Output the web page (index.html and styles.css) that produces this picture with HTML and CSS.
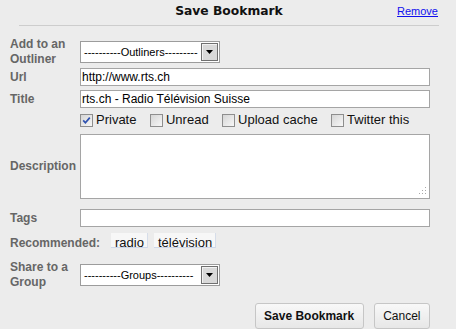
FILE: index.html
```html
<!DOCTYPE html>
<html lang="fr">
<head>
<meta charset="utf-8">
<title>Save Bookmark</title>
<link rel="stylesheet" href="styles.css">
</head>
<body>
<div class="dialog">
  <header class="head">
    <span></span>
    <h1 class="title">Save Bookmark</h1>
    <a class="remove" href="#">Remove</a>
  </header>
  <form class="form">
    <div class="row row-tall">
      <label class="label">Add to an Outliner</label>
      <div class="select">
        <span class="select-text">----------Outliners---------</span>
        <span class="select-btn"><svg width="7" height="4" viewBox="0 0 7 4"><polygon points="0,0 7,0 3.5,4" fill="#000"/></svg></span>
      </div>
    </div>
    <div class="row row-url">
      <label class="label">Url</label>
      <input class="input" type="text" value="http://www.rts.ch">
    </div>
    <div class="row row-title">
      <label class="label">Title</label>
      <input class="input" type="text" value="rts.ch - Radio Télévision Suisse">
    </div>
    <div class="checks">
      <span class="check"><span class="cb"><svg width="11" height="11" viewBox="0 0 11 11"><path d="M2.2 5.4 L4.4 7.8 L8.8 2.6" fill="none" stroke="#2f52b0" stroke-width="1.7"/></svg></span>Private</span>
      <span class="check"><span class="cb"></span>Unread</span>
      <span class="check"><span class="cb"></span>Upload cache</span>
      <span class="check"><span class="cb"></span>Twitter this</span>
    </div>
    <div class="row row-desc">
      <label class="label">Description</label>
      <div class="area-wrap">
        <textarea class="area"></textarea>
        <svg class="grip" width="9" height="9" viewBox="0 0 9 9"><g fill="#a8a8a8"><rect x="7" y="1" width="1" height="1"/><rect x="4" y="4" width="1" height="1"/><rect x="7" y="4" width="1" height="1"/><rect x="1" y="7" width="1" height="1"/><rect x="4" y="7" width="1" height="1"/><rect x="7" y="7" width="1" height="1"/></g></svg>
      </div>
    </div>
    <div class="row row-tags">
      <label class="label">Tags</label>
      <input class="input" type="text" value="">
    </div>
    <div class="row row-rec">
      <span class="label label-auto">Recommended:</span>
      <span class="tag">radio</span>
      <span class="tag">télévision</span>
    </div>
    <div class="row row-tall row-share">
      <label class="label label-share">Share to a Group</label>
      <div class="select">
        <span class="select-text">----------Groups----------</span>
        <span class="select-btn"><svg width="7" height="4" viewBox="0 0 7 4"><polygon points="0,0 7,0 3.5,4" fill="#000"/></svg></span>
      </div>
    </div>
    <div class="actions">
      <button type="button" class="btn btn-primary">Save Bookmark</button>
      <button type="button" class="btn">Cancel</button>
    </div>
  </form>
</div>
</body>
</html>
```
FILE: styles.css
```css
html, body {
  margin: 0;
  padding: 0;
}
body {
  background: #ececec;
  font-family: "Liberation Sans", Arial, sans-serif;
  color: #000;
  width: 456px;
  height: 329px;
  overflow: hidden;
}
.head {
  display: grid;
  grid-template-columns: 1fr auto 1fr;
  align-items: center;
  margin: 0 17px 0 19px;
  height: 26px;
  box-sizing: border-box;
  padding-bottom: 3px;
  border-bottom: 1px solid #cdcdcd;
}
.title {
  margin: 0;
  font-family: "DejaVu Sans", Verdana, sans-serif;
  font-weight: bold;
  font-size: 12.3px;
  color: #111;
}
.remove {
  justify-self: end;
  margin-right: 1px;
  font-size: 11px;
  color: #1010ee;
  text-decoration: underline;
}
.form {
  display: flex;
  flex-direction: column;
  padding: 11px 26px 0 10px;
  margin: 0;
}
.row {
  display: flex;
  align-items: center;
}
.label {
  width: 70px;
  flex: none;
  font-weight: bold;
  font-size: 12px;
  line-height: 15px;
  color: #666;
}
.row-tall {
  min-height: 30px;
}
.row-url {
  margin-top: 1px;
}
.row-title {
  margin-top: 4px;
}
.input {
  flex: 1;
  min-width: 0;
  height: 18px;
  box-sizing: border-box;
  margin: 0;
  padding: 0 1px;
  border: 1px solid #a5a5a5;
  background: #fff;
  font-family: "Liberation Sans", Arial, sans-serif;
  font-size: 12px;
  color: #000;
  outline: none;
}
.select {
  width: 140px;
  height: 22px;
  box-sizing: border-box;
  border: 1px solid #9c9c9c;
  background: #fff;
  display: flex;
  align-items: center;
  padding: 1px;
  font-size: 11px;
}
.select-text {
  flex: 1;
  padding-left: 2px;
  white-space: nowrap;
  overflow: hidden;
}
.select-btn {
  width: 17px;
  height: 18px;
  box-sizing: border-box;
  border: 1px solid #707070;
  background: #d9d9d9;
  box-shadow: inset 1px 1px 0 #f2f2f2;
  display: flex;
  align-items: center;
  justify-content: center;
}
.checks {
  display: flex;
  align-items: center;
  gap: 13.5px;
  margin-top: 3px;
  padding-left: 70px;
  height: 18px;
}
.check {
  display: flex;
  align-items: center;
  gap: 3px;
  font-size: 13px;
  line-height: 18px;
  color: #111;
}
.cb {
  width: 13px;
  height: 13px;
  box-sizing: border-box;
  border: 1px solid #8e8e8e;
  background: linear-gradient(135deg, #d6d6d6, #f7f7f7);
  display: flex;
  align-items: center;
  justify-content: center;
}
.row-desc {
  margin-top: 5px;
}
.area-wrap {
  flex: 1;
  position: relative;
  height: 65px;
}
.area {
  display: block;
  width: 100%;
  height: 65px;
  box-sizing: border-box;
  margin: 0;
  border: 1px solid #a5a5a5;
  background: #fff;
  resize: none;
  outline: none;
}
.grip {
  position: absolute;
  right: 3px;
  bottom: 4px;
}
.row-tags {
  margin-top: 10px;
}
.row-rec {
  align-items: baseline;
  margin-top: 6px;
}
.label-auto {
  width: auto;
  margin-right: 11px;
}
.tag {
  display: inline-block;
  height: 15px;
  box-sizing: border-box;
  padding: 2px 3px 0 4px;
  margin-right: 6px;
  line-height: 15px;
  font-size: 13px;
  color: #111;
  background: #f7f7f7;
  border-bottom: 1px solid #cdd7ea;
  border-right: 1px solid #d6dde9;
}
.row-share {
  margin-top: 9px;
}
.actions {
  display: flex;
  justify-content: flex-end;
  gap: 10px;
  margin-top: 13px;
}
.btn {
  height: 26px;
  box-sizing: border-box;
  margin: 0;
  padding: 0 8.5px;
  border: 1px solid #c6c6c6;
  border-radius: 3px;
  background: linear-gradient(#f8f8f8, #e7e7e7);
  font-family: "Liberation Sans", Arial, sans-serif;
  font-size: 12px;
  color: #111;
}
.btn-primary {
  font-weight: bold;
}
```
